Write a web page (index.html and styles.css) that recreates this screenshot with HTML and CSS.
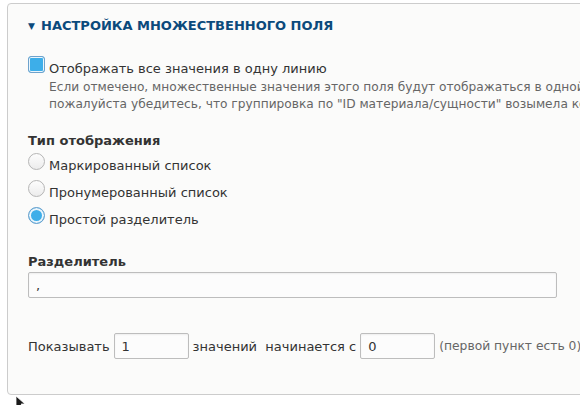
FILE: index.html
```html
<!DOCTYPE html>
<html lang="ru">
<head>
    <meta charset="UTF-8">
    <title>Настройка множественного поля</title>
    <link rel="stylesheet" href="styles.css">
</head>
<body>
    <div class="panel">
        <div class="panel-title"><span class="arrow">▼</span>Настройка множественного поля</div>

        <div class="form-item check-item">
            <label class="option">
                <input type="checkbox" class="check" checked>
                <span>Отображать все значения в одну линию</span>
            </label>
            <div class="description">
                Если отмечено, множественные значения этого поля будут отображаться в одной строке.<br>
                пожалуйста убедитесь, что группировка по "ID материала/сущности" возымела конкретное действие.
            </div>
        </div>

        <div class="form-item radios">
            <div class="form-label">Тип отображения</div>
            <label class="option"><input type="radio" name="type" class="radio"><span>Маркированный список</span></label>
            <label class="option"><input type="radio" name="type" class="radio"><span>Пронумерованный список</span></label>
            <label class="option"><input type="radio" name="type" class="radio" checked><span>Простой разделитель</span></label>
        </div>

        <div class="form-item separator">
            <div class="form-label">Разделитель</div>
            <input type="text" class="text wide" value=",">
        </div>

        <div class="form-item inline">
            <span>Показывать</span>
            <input type="text" class="text small" value="1">
            <span>значений&nbsp; начинается с</span>
            <input type="text" class="text small" value="0">
            <span class="hint">(первой пункт есть 0)</span>
        </div>
    </div>
    <svg class="cursor" width="12" height="14" viewBox="0 0 12 14">
        <path d="M1 1 L1 13 L4 10 L7 14 L9 13 L6 9 L10 9 Z" fill="#1a1a1a" stroke="#fff" stroke-width="0.8"/>
    </svg>
</body>
</html>
```

FILE: styles.css
```css
body {
    margin: 0;
    background: #fff;
    font-family: "DejaVu Sans", sans-serif;
    font-size: 13px;
    color: #333;
    overflow: hidden;
    width: 580px;
    height: 405px;
}
.panel {
    margin: 3px 0 0 7px;
    width: 620px;
    height: 392px;
    box-sizing: border-box;
    border: 1px solid #ccc;
    border-radius: 4px;
    background-color: #fbfbfa;
    padding: 13px 0 0 20px;
}
.panel-title {
    font-weight: bold;
    font-size: 13px;
    text-transform: uppercase;
    color: #0b4a7c;
    line-height: 18px;
}
.arrow {
    font-size: 9px;
    display: inline-block;
    width: 13px;
    vertical-align: 1px;
}
.form-item {
    white-space: nowrap;
}
.option {
    display: flex;
    align-items: flex-start;
    gap: 4px;
}
.option span {
    line-height: 18px;
    padding-top: 4px;
}
.check-item {
    margin-top: 21px;
}
.check {
    appearance: none;
    margin: 0;
    width: 17px;
    height: 17px;
    border: 1px solid #6ea2cc;
    border-radius: 3px;
    background: #3daee9;
    box-shadow: inset 0 0 0 1px #eaf5fc;
    box-sizing: border-box;
}
.description {
    font-size: 12.2px;
    color: #666;
    line-height: 17px;
    margin: 1px 0 0 21px;
}
.radios {
    margin-top: 19px;
}
.form-label {
    font-weight: bold;
    line-height: 18px;
}
.radios .option {
    margin-top: 5px;
}
.radios .form-label + .option {
    margin-top: 3px;
}
.radio {
    appearance: none;
    margin: 0;
    width: 17px;
    height: 17px;
    border: 1px solid #b5b5b5;
    border-radius: 50%;
    background: linear-gradient(#fdfdfd, #ececec);
    box-sizing: border-box;
}
.radio:checked {
    border-color: #6ea2cc;
    background: #3daee9;
    box-shadow: inset 0 0 0 2px #eaf5fc;
}
.separator {
    margin-top: 24px;
}
.text {
    font-family: "DejaVu Sans", sans-serif;
    font-size: 13px;
    color: #333;
    border: 1px solid #bdbdbd;
    border-radius: 2px;
    background: #fcfcfc;
    box-shadow: inset 0 1px 2px rgba(0, 0, 0, 0.06);
    box-sizing: border-box;
    height: 26px;
    padding: 0 7px;
    margin: 0;
}
.wide {
    width: 529px;
    margin-top: 1px;
}
.inline {
    margin-top: 35px;
    display: flex;
    align-items: center;
    gap: 4px;
}
.inline .small {
    width: 75px;
}
.hint {
    font-size: 12.3px;
    color: #666;
}
.cursor {
    position: absolute;
    left: 15px;
    top: 395px;
}
```
